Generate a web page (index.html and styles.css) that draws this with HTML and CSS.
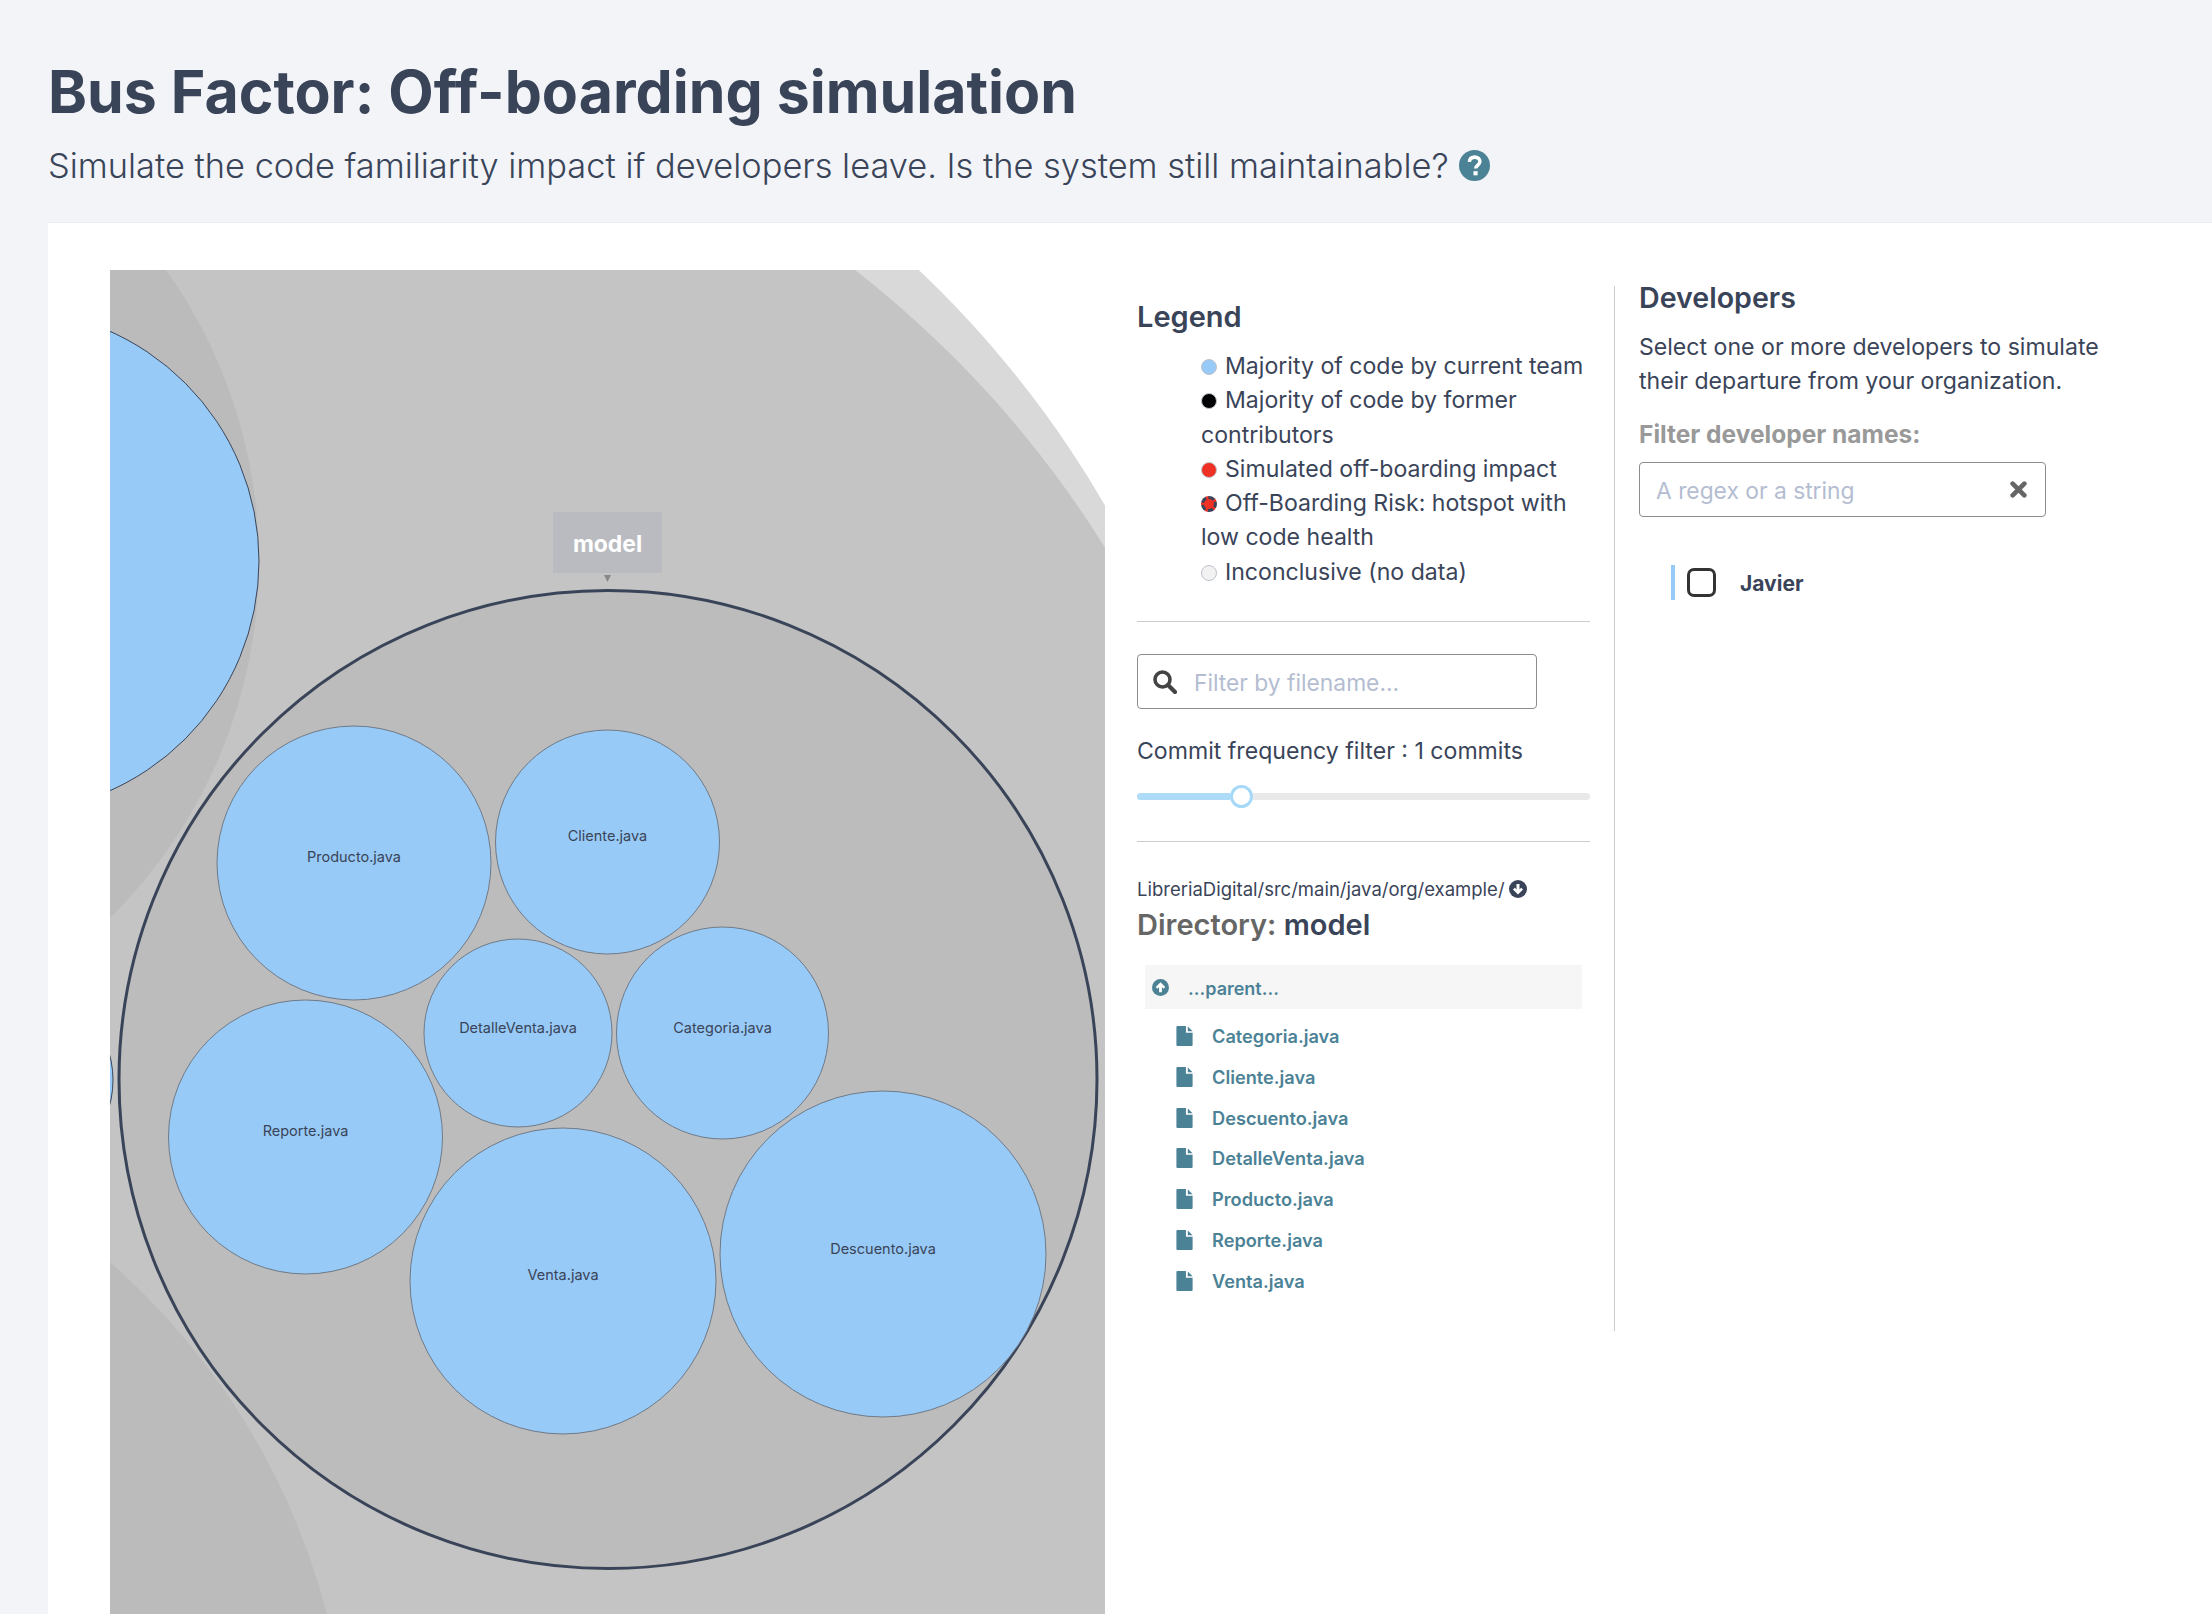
FILE: index.html
```html
<!DOCTYPE html>
<html lang="en">
<head>
	<meta charset="UTF-8">
	<title>Bus Factor: Off-boarding simulation</title>
	<link rel="stylesheet" href="styles.css">
</head>
<body>
	<header class="page_header">
		<h1>Bus Factor: Off-boarding simulation</h1>
		<p class="subtitle">
			Simulate the code familiarity impact if developers leave. Is the system still maintainable?
			<svg class="help_icon" viewBox="0 0 30 30"><circle cx="15" cy="15" r="15" fill="#4c8296"/><path d="M10 11.5c.4-3 2.4-4.6 5.2-4.6 3 0 5 1.800 5 4.300 0 3.600-4.100 3.600-4.100 6.600" fill="none" stroke="#fff" stroke-width="3.400"/><rect x="14" y="20.500" width="4" height="4" fill="#fff"/></svg>
		</p>
	</header>

	<main class="card">
		<!-- Circle packing -->
		<svg class="chart" viewBox="110 269 995 1344">
			<rect x="110" y="269" width="995" height="1344" fill="#fff"/>
			<circle cx="196" cy="1032" r="1051" fill="#d9d9d9"/>
			<circle cx="200" cy="1110" r="1066" fill="#c4c4c4"/>
			<circle cx="-243" cy="560" r="502" fill="#bbb"/>
			<circle cx="-351" cy="1788" r="700" fill="#bbb"/>
			<circle cx="7.500" cy="560" r="251.500" class="leaf_big"/>
			<circle cx="16" cy="1079" r="97" class="leaf_big"/>
			<circle cx="608" cy="1078.500" r="489" fill="#bcbcbc" stroke="#3a4459" stroke-width="3"/>

			<circle cx="354" cy="862" r="137" class="leaf"/>
			<circle cx="607.500" cy="841" r="112" class="leaf"/>
			<circle cx="518" cy="1032" r="94" class="leaf"/>
			<circle cx="722.500" cy="1032" r="106" class="leaf"/>
			<circle cx="305.500" cy="1136" r="137" class="leaf"/>
			<circle cx="563" cy="1280" r="153" class="leaf"/>
			<circle cx="883" cy="1253" r="163" class="leaf"/>

			<text x="354" y="861" class="leaf_label">Producto.java</text>
			<text x="607.500" y="840" class="leaf_label">Cliente.java</text>
			<text x="518" y="1032" class="leaf_label">DetalleVenta.java</text>
			<text x="722.500" y="1032" class="leaf_label">Categoria.java</text>
			<text x="305.500" y="1135" class="leaf_label">Reporte.java</text>
			<text x="563" y="1279" class="leaf_label">Venta.java</text>
			<text x="883" y="1253" class="leaf_label">Descuento.java</text>

			<rect x="553" y="511" width="109" height="61" fill="#b9bbc0"/>
			<text x="607.500" y="551" class="dir_label">model</text>
			<path d="M604 574h7l-3.500 7z" fill="#888"/>
		</svg>

		<!-- Legend and file list -->
		<section class="middle_col">
			<h3 class="legend_title">Legend</h3>
			<ul class="legend">
				<li><span class="dot dot_current"></span>Majority of code by current team</li>
				<li><span class="dot dot_former"></span>Majority of code by former contributors</li>
				<li><span class="dot dot_impact"></span>Simulated off-boarding impact</li>
				<li><span class="dot dot_risk"></span>Off-Boarding Risk: hotspot with low code health</li>
				<li><span class="dot dot_none"></span>Inconclusive (no data)</li>
			</ul>
			<hr class="rule rule_first">

			<div class="field search_field">
				<svg class="search_icon" viewBox="0 0 24 24"><circle cx="9.500" cy="9.500" r="7.500" fill="none" stroke="#444" stroke-width="3.600"/><path d="M15 15l7 7" stroke="#444" stroke-width="4.200" stroke-linecap="round"/></svg>
				<span class="placeholder">Filter by filename...</span>
			</div>

			<p class="commit_label">Commit frequency filter : 1 commits</p>
			<div class="slider">
				<div class="slider_fill"></div>
				<div class="slider_thumb"></div>
				<div class="slider_rest"></div>
			</div>
			<hr class="rule rule_second">

			<p class="path">LibreriaDigital/src/main/java/org/example/
				<svg class="path_icon" viewBox="0 0 18 18"><circle cx="9" cy="9" r="9" fill="#3a4459"/><path d="M9 14.500L4 9.500l1.800-1.800 1.700 1.700V4h3v5.400l1.700-1.700L14 9.500z" fill="#fff"/></svg>
			</p>
			<h2 class="dir_title">Directory: <b>model</b></h2>

			<div class="parent_row">
				<svg class="parent_icon" viewBox="0 0 18 18"><circle cx="9" cy="9" r="9" fill="#4c8296"/><path d="M9 3.500l5 5-1.800 1.800-1.700-1.700V14h-3V8.600L5.800 10.300 4 8.500z" fill="#fff"/></svg>
				<span class="parent_text">...parent...</span>
			</div>
			<ul class="files">
				<li><svg class="file_icon" viewBox="0 0 17 21"><use href="#file_shape"/></svg>Categoria.java</li>
				<li><svg class="file_icon" viewBox="0 0 17 21"><use href="#file_shape"/></svg>Cliente.java</li>
				<li><svg class="file_icon" viewBox="0 0 17 21"><use href="#file_shape"/></svg>Descuento.java</li>
				<li><svg class="file_icon" viewBox="0 0 17 21"><use href="#file_shape"/></svg>DetalleVenta.java</li>
				<li><svg class="file_icon" viewBox="0 0 17 21"><use href="#file_shape"/></svg>Producto.java</li>
				<li><svg class="file_icon" viewBox="0 0 17 21"><use href="#file_shape"/></svg>Reporte.java</li>
				<li><svg class="file_icon" viewBox="0 0 17 21"><use href="#file_shape"/></svg>Venta.java</li>
			</ul>
			<svg class="defs" width="0" height="0"><defs><g id="file_shape"><path d="M1 0h9v7h7v13a1 1 0 0 1-1 1H1a1 1 0 0 1-1-1V1a1 1 0 0 1 1-1z" fill="#4c8296"/><path d="M12 0.500l5 5h-5z" fill="#4c8296"/></g></defs></svg>
		</section>

		<!-- Developers -->
		<aside class="right_col">
			<h3 class="dev_title">Developers</h3>
			<p class="dev_text">Select one or more developers to simulate their departure from your organization.</p>
			<p class="dev_label">Filter developer names:</p>
			<div class="field dev_field">
				<span class="placeholder">A regex or a string</span>
				<svg class="clear_icon" viewBox="0 0 16 16"><path d="M2.500 2.500l11 11M13.500 2.500l-11 11" stroke="#666" stroke-width="4.400" stroke-linecap="round"/></svg>
			</div>
			<div class="dev_row">
				<span class="checkbox"></span>
				<span class="dev_name">Javier</span>
			</div>
		</aside>
	</main>
</body>
</html>
```

FILE: styles.css
```css
html, body {
	margin: 0;
	height: 1614px;
	overflow: hidden;
}
body {
	background: #f2f4f8;
	color: #3a4459;
	font-family: "Inter", "Liberation Sans", sans-serif;
	font-size: 23.100px;
}
h1, h2, h3, p, ul {
	margin: 0;
	padding: 0;
}
ul {
	list-style: none;
}

.page_header {
	height: 222px;
	padding-left: 48px;
	box-sizing: border-box;
}
h1 {
	padding-top: 58px;
	font-size: 59px;
	line-height: 68px;
	font-weight: 700;
}
.subtitle {
	display: flex;
	align-items: center;
	gap: 10px;
	margin-top: 20px;
	height: 38px;
	font-size: 34.400px;
	font-weight: 300;
	white-space: nowrap;
}
.help_icon {
	width: 31px;
	height: 31px;
}

.card {
	display: flex;
	align-items: flex-start;
	height: 1392px;
	margin-left: 48px;
	padding: 47px 0 0 62px;
	box-sizing: border-box;
	background: #fff;
	border-top: 1px solid #eceef2;
}

.chart {
	display: block;
	flex: none;
	width: 995px;
	height: 1344px;
}
.leaf {
	fill: #97caf6;
	stroke: #6f7a88;
	stroke-width: 1;
}
.leaf_big {
	fill: #97caf6;
	stroke: #3a4459;
	stroke-width: 1;
}
.leaf_label {
	font-size: 14.500px;
	fill: #3a4459;
	text-anchor: middle;
}
.dir_label {
	font-size: 22.900px;
	font-weight: 700;
	fill: #fff;
	text-anchor: middle;
}

.middle_col {
	flex: none;
	width: 453px;
	margin-left: 32px;
}
.legend_title {
	margin-top: 27px;
	font-size: 29px;
	line-height: 40px;
	font-weight: 600;
}
.legend {
	margin-top: 12px;
	padding-left: 64px;
	line-height: 34.300px;
}
.dot {
	display: inline-block;
	width: 16px;
	height: 16px;
	margin-right: 8px;
	border: 1px solid #bdc3cc;
	border-radius: 50%;
	box-sizing: border-box;
	vertical-align: -1px;
}
.dot_current { background: #97caf6; }
.dot_former { background: #000; }
.dot_impact { background: #ee3124; }
.dot_risk {
	background: #ee3124;
	border: 3px dashed #3a4459;
}
.dot_none { background: #f2f2f2; }

.rule {
	height: 1px;
	margin-bottom: 0;
	border: 0;
	background: #ccc;
}
.rule_first { margin-top: 32px; }
.rule_second { margin-top: 33px; }

.field {
	display: flex;
	align-items: center;
	box-sizing: border-box;
	background: #fff;
	border: 1px solid #8c8c8c;
	border-radius: 4px;
}
.placeholder {
	padding-top: 2px;
	color: #b4bdd1;
	font-size: 22.800px;
}
.search_field {
	width: 400px;
	height: 55px;
	margin-top: 32px;
	padding-left: 15px;
}
.search_icon {
	width: 24px;
	height: 24px;
	margin-right: 17px;
}

.commit_label {
	margin-top: 25px;
	line-height: 34px;
}
.slider {
	display: flex;
	align-items: center;
	height: 24px;
	margin-top: 16px;
}
.slider_fill {
	width: 93px;
	height: 7px;
	background: #aedcf8;
	border-radius: 4px 0 0 4px;
}
.slider_thumb {
	flex: none;
	width: 23px;
	height: 23px;
	box-sizing: border-box;
	background: #fff;
	border: 3px solid #a6d9f7;
	border-radius: 50%;
}
.slider_rest {
	flex: 1;
	height: 7px;
	background: #e9e9e9;
	border-radius: 0 4px 4px 0;
}

.path {
	display: flex;
	align-items: center;
	gap: 4px;
	margin-top: 33px;
	font-size: 18.500px;
	line-height: 28px;
	white-space: nowrap;
}
.path_icon {
	width: 18px;
	height: 18px;
}
.dir_title {
	margin-top: 3px;
	font-size: 29px;
	line-height: 38px;
	font-weight: 600;
	color: #666;
}
.dir_title b {
	font-weight: 600;
	color: #3a4459;
}

.parent_row {
	display: flex;
	align-items: center;
	width: 437px;
	height: 44px;
	margin: 21px 0 0 8px;
	padding-left: 7px;
	box-sizing: border-box;
	background: #f6f6f6;
	color: #4c8296;
	font-size: 18px;
	font-weight: 600;
}
.parent_text {
	padding-top: 2px;
}
.parent_icon {
	width: 17px;
	height: 17px;
	margin-right: 19px;
}
.files {
	margin-top: 7px;
	padding-left: 39px;
}
.files li {
	display: flex;
	align-items: center;
	height: 40.700px;
	color: #4c8296;
	font-size: 18.200px;
	font-weight: 600;
}
.file_icon {
	width: 17px;
	height: 20px;
	margin-right: 19px;
}
.defs {
	position: absolute;
}

.right_col {
	flex: none;
	width: 570px;
	height: 1045px;
	margin: 16px 0 0 24px;
	padding-left: 24px;
	box-sizing: border-box;
	border-left: 1px solid #ccc;
}
.dev_title {
	font-size: 28.600px;
	line-height: 24px;
	font-weight: 600;
}
.dev_text {
	width: 470px;
	margin-top: 20px;
	line-height: 34px;
}
.dev_label {
	margin-top: 19px;
	font-size: 24.500px;
	line-height: 34px;
	font-weight: 700;
	color: #999;
}
.dev_field {
	justify-content: space-between;
	width: 407px;
	height: 55px;
	margin-top: 11px;
	padding: 0 18px 0 16px;
}
.clear_icon {
	width: 17px;
	height: 17px;
}
.dev_row {
	display: flex;
	align-items: center;
	height: 35px;
	margin: 48px 0 0 32px;
	padding-left: 12px;
	border-left: 4px solid #97caf6;
}
.checkbox {
	width: 29px;
	height: 29px;
	margin-right: 24px;
	box-sizing: border-box;
	border: 3px solid #333;
	border-radius: 7px;
}
.dev_name {
	padding-top: 2px;
	font-size: 21px;
	font-weight: 700;
}
```
